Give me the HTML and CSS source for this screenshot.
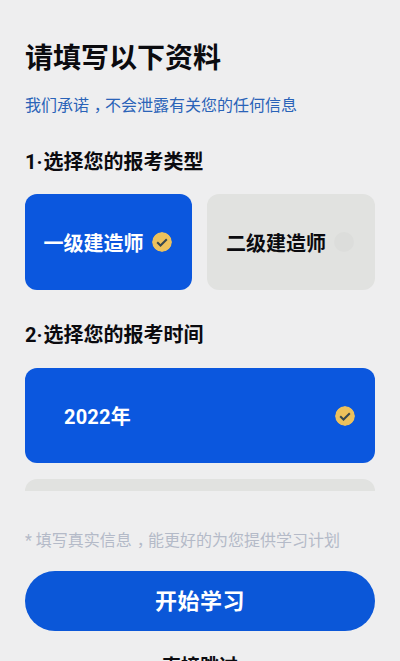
FILE: index.html
```html
<!DOCTYPE html>
<html lang="zh-CN">
<head>
<meta charset="utf-8">
<title>请填写以下资料</title>
<link rel="stylesheet" href="styles.css">
</head>
<body>
<main class="page">
  <h1 class="title">请填写以下资料</h1>
  <p class="subtitle">我们承诺<span class="comma">，</span>不会泄露有关您的任何信息</p>
  <h2 class="section first"><span class="num">1·</span>选择您的报考类型</h2>
  <div class="types">
    <div class="card active">
      <span>一级建造师</span>
      <svg class="check" viewBox="0 0 20 20"><circle cx="10" cy="10" r="10" fill="#edc15c"/><path d="M5.2 10.3l3.3 3.2 6.3-6.3" fill="none" stroke="#37474f" stroke-width="2"/></svg>
    </div>
    <div class="card">
      <span>二级建造师</span>
      <span class="radio"></span>
    </div>
  </div>
  <h2 class="section second"><span class="num">2·</span>选择您的报考时间</h2>
  <div class="years">
    <div class="year active">
      <span>2022年</span>
      <svg class="check" viewBox="0 0 20 20"><circle cx="10" cy="10" r="10" fill="#edc15c"/><path d="M5.2 10.3l3.3 3.2 6.3-6.3" fill="none" stroke="#37474f" stroke-width="2"/></svg>
    </div>
    <div class="year"></div>
  </div>
  <p class="note">* 填写真实信息<span class="comma">，</span>能更好的为您提供学习计划</p>
  <button class="start">开始学习</button>
  <div class="skip">直接跳过</div>
</main>
</body>
</html>
```
FILE: styles.css
```css
html, body {
  margin: 0;
  height: 100%;
  overflow: hidden;
  background: #eeeeef;
}
body {
  font-family: Roboto, "Noto Sans CJK SC", sans-serif;
  color: #0b0b0f;
}
.page {
  height: 661px;
  padding: 0 25px;
  box-sizing: border-box;
  overflow: hidden;
}
.title {
  margin: 0;
  padding-top: 39px;
  font-size: 28px;
  line-height: 40px;
  font-weight: 700;
}
.subtitle {
  margin: 17px 0 0;
  font-size: 16px;
  line-height: 20px;
  color: #2a63b8;
}
.comma {
  padding-left: 0.3em;
  letter-spacing: -0.3em;
}
.section {
  margin: 0;
  font-size: 20px;
  line-height: 28px;
  font-weight: 700;
}
.num {
  margin-right: 1px;
}
.section.first { margin-top: 32px; }
.section.second { margin-top: 31px; }
.types {
  display: grid;
  grid-template-columns: 167px 168px;
  gap: 15px;
  margin-top: 18px;
}
.card {
  height: 96px;
  border-radius: 12px;
  background: #e1e2e0;
  display: flex;
  align-items: center;
  justify-content: center;
  gap: 8px;
  padding-right: 2px;
  box-sizing: border-box;
  font-size: 20px;
  font-weight: 700;
}
.active {
  background: #0b57de;
  color: #fff;
}
.check, .radio {
  width: 20px;
  height: 20px;
  flex: none;
  border-radius: 50%;
}
.radio { background: #dcdddb; }
.years {
  height: 123px;
  margin-top: 19px;
  overflow: hidden;
}
.year {
  height: 95px;
  border-radius: 12px;
  background: #e1e2e0;
  display: flex;
  align-items: center;
  justify-content: space-between;
  padding: 0 20px 0 39px;
  box-sizing: border-box;
  margin-bottom: 16px;
  font-size: 20px;
  font-weight: 700;
  letter-spacing: 0.2px;
}
.year.active {
  background: #0b57de;
}
.note {
  margin: 40px 0 0;
  font-size: 16px;
  line-height: 20px;
  color: #b4bac8;
  white-space: nowrap;
}
.start {
  display: block;
  width: 100%;
  height: 60px;
  margin: 20px 0 0;
  padding: 0 0 4px;
  border: 0;
  border-radius: 30px;
  background: #0b57d8;
  color: #fff;
  font: inherit;
  font-size: 22px;
  font-weight: 700;
  letter-spacing: 0.5px;
}
.skip {
  margin-top: 23px;
  text-align: center;
  font-size: 19px;
  line-height: 26px;
  font-weight: 700;
}
```
